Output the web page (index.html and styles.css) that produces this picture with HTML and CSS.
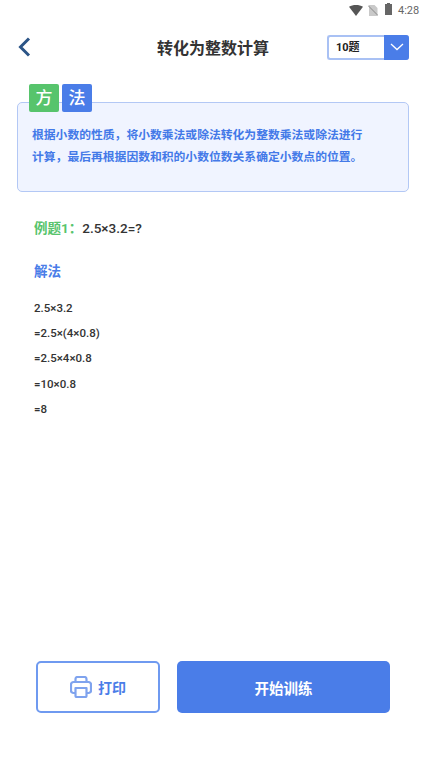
FILE: index.html
```html
<!DOCTYPE html>
<html lang="zh-CN">
  <head>
    <meta charset="UTF-8" />
    <meta name="viewport" content="width=device-width, initial-scale=1.0" />
    <title>转化为整数计算</title>
    <link rel="stylesheet" href="styles.css">
  </head>
  <body>
    <div class="page">
      <div class="status-bar">
        <svg class="icon-wifi" width="14" height="11" viewBox="0 0 14 11">
          <path d="M0 1.800C2 .6 4.400 0 7 0s5 .6 7 1.800L7 11z" fill="#555" />
        </svg>
        <svg class="icon-sim" width="10" height="11" viewBox="0 0 10 11">
          <path d="M1 0h5.500L9.500 3v8H1z" fill="#c9c9c9" />
          <path d="M0 .5l10 10" stroke="#888" stroke-width="1" />
        </svg>
        <svg class="icon-battery" width="7" height="12" viewBox="0 0 7 12">
          <path d="M2 0h3v1h2v11H0V1h2z" fill="#666" />
        </svg>
        <span class="time">4:28</span>
      </div>

      <header class="top-bar">
        <svg class="back" width="14" height="20" viewBox="0 0 14 20">
          <path d="M12 1.500L3.500 10l8.500 8.500" fill="none" stroke="#2c5587" stroke-width="3" />
        </svg>
        <h1>转化为整数计算</h1>
        <div class="count-select">
          <span class="count-value">10题</span>
          <span class="count-arrow">
            <svg width="14" height="8" viewBox="0 0 14 8">
              <path d="M1 1l6 5.500L13 1" fill="none" stroke="#fff" stroke-width="1.300" />
            </svg>
          </span>
        </div>
      </header>

      <section class="method-card">
        <div class="method-tags">
          <span class="tag tag-green">方</span>
          <span class="tag tag-blue">法</span>
        </div>
        <p>根据小数的性质，将小数乘法或除法转化为整数乘法或除法进行<br />计算，最后再根据因数和积的小数位数关系确定小数点的位置。</p>
      </section>

      <section class="example">
        <div class="question"><span class="question-label">例题1：</span>2.5×3.2=?</div>
        <div class="answer-title">解法</div>
        <ul class="steps">
          <li>2.5×3.2</li>
          <li>=2.5×(4×0.8)</li>
          <li>=2.5×4×0.8</li>
          <li>=10×0.8</li>
          <li>=8</li>
        </ul>
      </section>

      <footer class="actions">
        <button class="btn-print">
          <svg width="22" height="22" viewBox="0 0 22 22" fill="none" stroke="#7fa3ee" stroke-width="2.200" stroke-linejoin="round">
            <path d="M5.500 6V3a2 2 0 0 1 2-2h7a2 2 0 0 1 2 2v3" />
            <path d="M5.500 17H3.500a2.500 2.500 0 0 1-2.500-2.500V8.500A2.500 2.500 0 0 1 3.500 6h15A2.500 2.500 0 0 1 21 8.500v6a2.500 2.500 0 0 1-2.500 2.500h-2" />
            <path d="M5.500 12h11v8a1 1 0 0 1-1 1h-9a1 1 0 0 1-1-1z" />
          </svg>
          打印
        </button>
        <button class="btn-start">开始训练</button>
      </footer>
    </div>
  </body>
</html>
```

FILE: styles.css
```css
* {
  box-sizing: border-box;
}

body {
  margin: 0;
  background: #fff;
  font-family: "Roboto", "Noto Sans CJK SC", sans-serif;
}

.page {
  height: 759px;
  display: flex;
  flex-direction: column;
}

.status-bar {
  height: 20px;
  padding: 0 6px 0 349px;
  display: flex;
  align-items: center;
}

.icon-sim {
  margin-left: 5px;
}

.icon-battery {
  margin-left: 7px;
  margin-top: -2px;
}

.time {
  margin-left: 6px;
  font-size: 11px;
  color: #666;
}

.top-bar {
  height: 54px;
  padding: 0 17px;
  display: flex;
  align-items: center;
  justify-content: space-between;
  position: relative;
}

.top-bar h1 {
  position: absolute;
  left: 0;
  right: 0;
  margin: 0;
  text-align: center;
  font-size: 16px;
  font-weight: 700;
  color: #333;
}

.count-select {
  width: 82px;
  height: 25px;
  border: 2px solid #a9c1f4;
  border-right: none;
  border-radius: 3px;
  display: flex;
  justify-content: space-between;
  align-items: stretch;
}

.count-value {
  padding-left: 7px;
  font-size: 11px;
  font-weight: 700;
  line-height: 21px;
  color: #222;
}

.count-arrow {
  width: 25px;
  margin: -2px 0;
  background: #4a7de8;
  border-radius: 0 3px 3px 0;
  display: flex;
  justify-content: center;
  align-items: center;
}

.method-card {
  position: relative;
  margin: 28px 17px 0;
  height: 90px;
  padding: 21px 14px 0;
  background: #f0f4ff;
  border: 1px solid #b3c8f5;
  border-radius: 5px;
}

.method-card p {
  margin: 0;
  font-size: 11.800px;
  font-weight: 700;
  line-height: 22px;
  color: #4379e8;
}

.method-tags {
  position: absolute;
  left: 11px;
  top: -19px;
  display: flex;
  gap: 3px;
}

.tag {
  width: 30px;
  height: 28px;
  border-radius: 2px;
  color: #fff;
  font-size: 17px;
  font-weight: 500;
  line-height: 28px;
  text-align: center;
}

.tag-green {
  background: #57c46c;
}

.tag-blue {
  background: #4a7de8;
}

.example {
  flex: 1;
  padding: 25px 0 0 34px;
}

.question {
  font-size: 13.500px;
  font-weight: 500;
  line-height: 22px;
  color: #333;
}

.question-label {
  color: #57c46c;
  font-weight: 700;
}

.answer-title {
  margin-top: 21px;
  font-size: 13.500px;
  font-weight: 700;
  line-height: 22px;
  color: #4a7de8;
}

.steps {
  margin: 14px 0 0;
  padding: 0;
  list-style: none;
  font-size: 11.500px;
  font-weight: 500;
  color: #333;
}

.steps li {
  height: 25.200px;
  line-height: 25px;
}

.actions {
  padding: 0 36px 46px;
  display: flex;
  gap: 17px;
}

.actions button {
  height: 52px;
  border-radius: 5px;
  font-family: inherit;
  font-weight: 700;
  display: flex;
  justify-content: center;
  align-items: center;
  cursor: pointer;
}

.btn-print {
  width: 124px;
  gap: 6px;
  background: #fff;
  border: 2px solid #6f9af0;
  color: #4a7de8;
  font-size: 14px;
}

.btn-start {
  width: 213px;
  border: none;
  background: #4a7de8;
  color: #fff;
  font-size: 14.500px;
}
```
